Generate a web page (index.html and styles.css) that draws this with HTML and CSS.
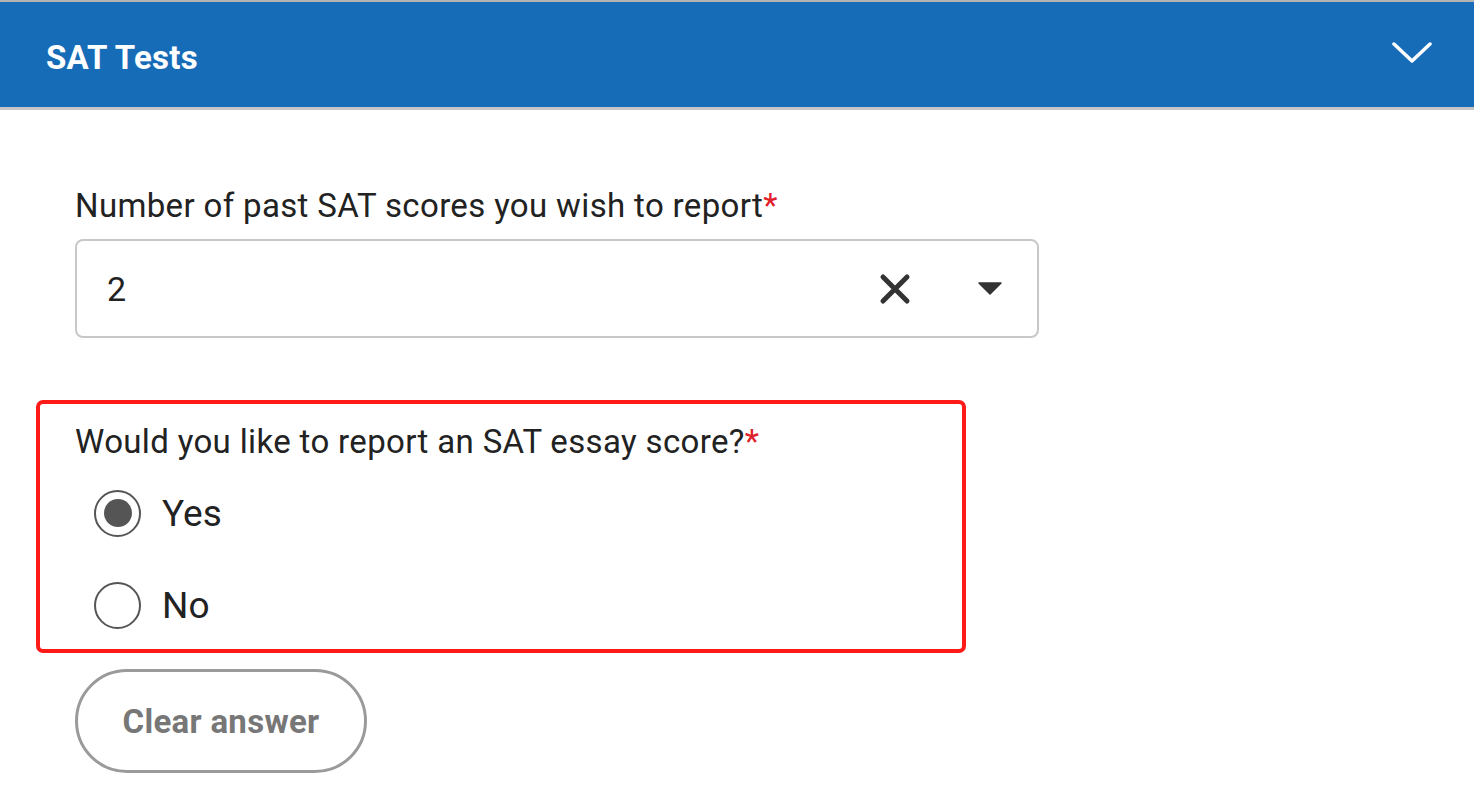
FILE: index.html
```html
<!DOCTYPE html>
<html lang="en">
<head>
    <meta charset="UTF-8">
    <meta name="viewport" content="width=device-width, initial-scale=1.0">
    <title>SAT Tests</title>
    <link rel="stylesheet" href="styles.css">
</head>
<body>

    <div class="section-header">
        <h2>SAT Tests</h2>
        <svg class="chevron" width="40" height="24" viewBox="0 0 40 24">
            <polyline points="2,3 20,20 38,3" fill="none" stroke="#fff" stroke-width="3.5" stroke-linecap="round" stroke-linejoin="round"/>
        </svg>
    </div>

    <div class="content">
        <!-- past scores dropdown -->
        <div class="field">
            <label class="field-label">Number of past SAT scores you wish to report<span class="req">*</span></label>
            <div class="select-box">
                <span class="select-value">2</span>
                <svg class="clear-icon" width="32" height="32" viewBox="0 0 32 32">
                    <path d="M4 4 L28 28 M28 4 L4 28" stroke="#333" stroke-width="5" stroke-linecap="round"/>
                </svg>
                <svg class="caret" width="24" height="13" viewBox="0 0 24 13">
                    <path d="M1 1 L23 1 L12 12 Z" fill="#333" stroke="#333" stroke-width="1.5" stroke-linejoin="round"/>
                </svg>
            </div>
        </div>

        <!-- essay question -->
        <div class="highlight">
            <div class="field-label">Would you like to report an SAT essay score?<span class="req">*</span></div>
            <label class="option">
                <span class="radio checked"></span>
                <span>Yes</span>
            </label>
            <label class="option">
                <span class="radio"></span>
                <span>No</span>
            </label>
        </div>

        <button class="clear-button">Clear answer</button>
    </div>

</body>
</html>
```

FILE: styles.css
```css
body {
    margin: 0;
    font-family: Roboto, "Liberation Sans", sans-serif;
    background: white;
    color: #222;
}

.section-header {
    display: flex;
    align-items: center;
    justify-content: space-between;
    box-sizing: border-box;
    height: 110px;
    padding: 6px 42px 0 46px;
    background: #176cb8;
    border-top: 2px solid #b4b4b4;
    border-bottom: 3px solid #c6c6c6;
}

.section-header h2 {
    margin: 0;
    font-size: 33px;
    font-weight: bold;
    letter-spacing: 0.3px;
    color: white;
}

.chevron {
    display: block;
    margin-top: -10px;
}

.content {
    padding: 78px 0 0 36px;
}

.field {
    padding-left: 39px;
}

.field-label {
    display: block;
    font-size: 33px;
    line-height: 35px;
    letter-spacing: 0.35px;
    color: #222;
}

.req {
    color: #e0202a;
}

.select-box {
    box-sizing: border-box;
    display: flex;
    align-items: center;
    width: 964px;
    height: 99px;
    margin-top: 16px;
    padding: 0 35px 0 30px;
    border: 2px solid #c8c8c8;
    border-radius: 8px;
}

.select-value {
    flex: 1;
    font-size: 34px;
    color: #222;
}

.clear-icon {
    margin-right: 67px;
}

.highlight {
    box-sizing: border-box;
    width: 930px;
    margin-top: 62px;
    padding: 20px 0 9px 35px;
    border: 4px solid #ff1a1a;
    border-radius: 7px;
}

.option {
    display: flex;
    align-items: center;
    gap: 21px;
    height: 70px;
    margin: 22px 0 0 19px;
    font-size: 37px;
    color: #222;
}

.option:first-of-type {
    margin-top: 19px;
}

.radio {
    box-sizing: border-box;
    width: 47px;
    height: 47px;
    border: 2px solid #555;
    border-radius: 50%;
    display: flex;
    align-items: center;
    justify-content: center;
}

.radio.checked::after {
    content: "";
    width: 28px;
    height: 28px;
    border-radius: 50%;
    background: #555;
}

.clear-button {
    display: block;
    width: 292px;
    height: 104px;
    margin: 16px 0 0 39px;
    background: white;
    border: 3px solid #9a9a9a;
    border-radius: 52px;
    font-family: Roboto, "Liberation Sans", sans-serif;
    font-size: 33px;
    font-weight: bold;
    letter-spacing: 0.3px;
    color: #777;
    cursor: pointer;
}
```
